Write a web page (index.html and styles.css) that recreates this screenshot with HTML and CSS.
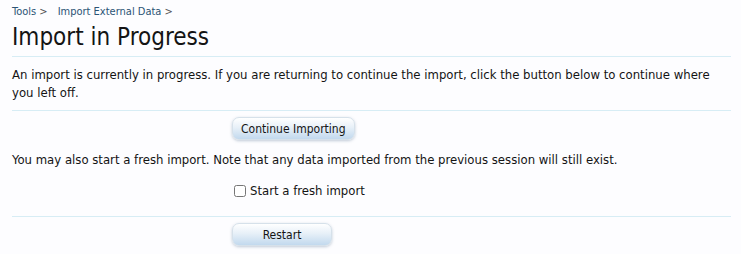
FILE: index.html
```html
<!DOCTYPE html>
<html>
<head>
<meta charset="utf-8">
<link rel="stylesheet" href="styles.css">
</head>
<body>
<div class="page">
  <nav class="crumbs">
    <a class="crumb" href="#">Tools</a><span class="sep">&gt;</span>
    <a class="crumb" href="#">Import External Data</a><span class="sep">&gt;</span>
  </nav>
  <h1 class="title">Import in Progress</h1>
  <p class="text">An import is currently in progress. If you are returning to continue the import, click the button below to continue where you left off.</p>
  <div class="row">
    <button class="btn">Continue Importing</button>
  </div>
  <p class="text text2">You may also start a fresh import. Note that any data imported from the previous session will still exist.</p>
  <div class="row row-check">
    <label class="check"><input type="checkbox" class="box"> Start a fresh import</label>
  </div>
  <div class="row">
    <button class="btn btn-min">Restart</button>
  </div>
</div>
</body>
</html>
```
FILE: styles.css
```css
html, body {
  margin: 0;
  padding: 0;
  background: #fdfdff;
}
body {
  font-family: "DejaVu Sans Condensed", "DejaVu Sans", sans-serif;
  font-stretch: condensed;
  font-size: 13px;
  color: #141414;
}
.page {
  padding: 4px 10px 0 12px;
}
.crumbs {
  font-size: 11px;
  line-height: 15px;
  height: 15px;
}
.crumb {
  color: #2b5475;
  text-decoration: none;
}
.sep {
  color: #555;
  margin: 0 7px 0 3px;
}
.title {
  margin: 0;
  font-weight: normal;
  font-size: 24px;
  line-height: 37px;
  color: #141414;
  border-bottom: 1px solid #d7edf5;
}
.text {
  margin: 0;
  padding: 9px 0 8px 0;
  line-height: 18px;
  border-bottom: 1px solid #d7edf5;
}
.text2 {
  border-bottom: none;
  padding: 5px 0 6px 0;
}
.row {
  padding: 6px 0 6px 220px;
}
.row-check {
  padding: 8px 0 16px 220px;
  border-bottom: 1px solid #d7edf5;
}
.check {
  display: inline-flex;
  align-items: center;
  font-size: 13px;
  line-height: 16px;
}
.box {
  margin: 0 4px 0 2px;
  width: 12px;
  height: 12px;
}
.btn {
  font-family: inherit;
  font-stretch: condensed;
  font-size: 12px;
  color: #141414;
  height: 23px;
  padding: 0 8px;
  border: 1px solid #d6e1ea;
  border-radius: 7px;
  background: linear-gradient(to bottom, #ffffff 0%, #e7f0f8 45%, #c2d9ee 100%);
  box-shadow: 0 1px 3px rgba(80, 110, 140, 0.35);
}
.btn-min {
  min-width: 100px;
}
```
